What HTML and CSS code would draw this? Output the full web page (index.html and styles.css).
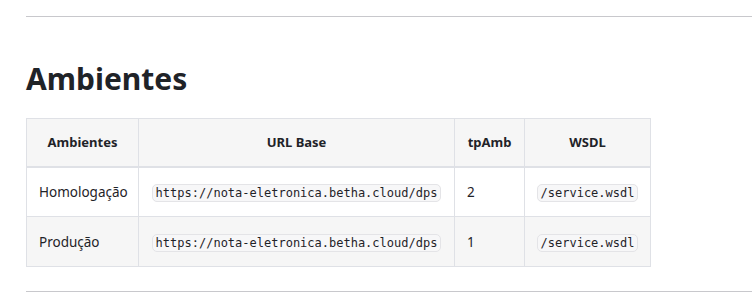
FILE: index.html
```html
<!DOCTYPE html>
<html lang="pt-BR">
<head>
    <meta charset="UTF-8">
    <title>Ambientes</title>
    <link rel="stylesheet" href="styles.css">
</head>
<body>
    <div class="doc">
        <hr class="rule">
        <h2>Ambientes</h2>
        <table class="env-table">
            <thead>
                <tr>
                    <th class="col-env">Ambientes</th>
                    <th class="col-url">URL Base</th>
                    <th class="col-tp">tpAmb</th>
                    <th class="col-wsdl">WSDL</th>
                </tr>
            </thead>
            <tbody>
                <tr>
                    <td>Homologação</td>
                    <td><code>https://nota-eletronica.betha.cloud/dps</code></td>
                    <td>2</td>
                    <td><code>/service.wsdl</code></td>
                </tr>
                <tr>
                    <td>Produção</td>
                    <td><code>https://nota-eletronica.betha.cloud/dps</code></td>
                    <td>1</td>
                    <td><code>/service.wsdl</code></td>
                </tr>
            </tbody>
        </table>
        <hr class="rule bottom">
    </div>
</body>
</html>
```

FILE: styles.css
```css
* {
    margin: 0;
    padding: 0;
    box-sizing: border-box;
}

body {
    font-family: 'Noto Sans', 'Open Sans', sans-serif;
    color: #1f2328;
    background: #fff;
    font-size: 13.5px;
}

.doc {
    padding: 16px 0 0 26px;
}

.rule {
    border: none;
    height: 1px;
    background: #c8c8cc;
}

h2 {
    font-size: 30px;
    font-weight: 700;
    line-height: 40px;
    margin: 42px 0 19px;
    color: #1f2328;
}

.env-table {
    border-collapse: collapse;
    table-layout: fixed;
    width: 624px;
}

.env-table th,
.env-table td {
    border: 1px solid #dfe1e6;
    height: 50px;
    padding: 0 12px;
    vertical-align: middle;
}

.env-table th {
    font-weight: 700;
    text-align: center;
    background: #f6f6f6;
    height: 48px;
    border-bottom: 2px solid #dfe1e6;
    font-size: 13px;
}

.env-table td:nth-child(1) { text-align: left; }
.env-table td:nth-child(2) { text-align: center; padding: 0 10px; }
.env-table td:nth-child(3) { text-align: left; }
.env-table td:nth-child(4) { text-align: center; padding: 0 6px; }

.env-table tbody tr:nth-child(2) {
    background: #f6f6f6;
}

.col-env { width: 112px; }
.col-url { width: 316px; }
.col-tp { width: 70px; }
.col-wsdl { width: 126px; }

code {
    font-family: 'DejaVu Sans Mono', 'Liberation Mono', monospace;
    font-size: 12px;
    background: #f7f7f8;
    border: 1px solid #e4e4e7;
    border-radius: 5px;
    padding: 1px 3px;
}

.bottom {
    margin-top: 24px;
}
```
